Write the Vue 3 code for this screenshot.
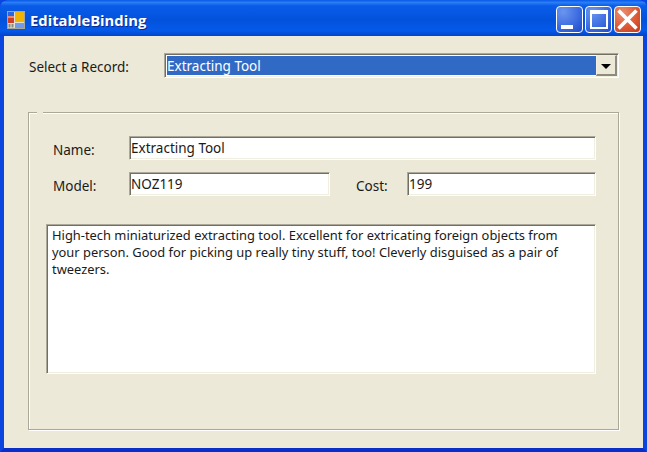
<script setup>
const description = 'High-tech miniaturized extracting tool. Excellent for extricating foreign objects from your person. Good for picking up really tiny stuff, too! Cleverly disguised as a pair of tweezers.'
</script>

<template>
  <div class="window">
    <header class="titlebar">
      <svg class="app-icon" width="18" height="18" viewBox="0 0 18 18">
        <rect x="0.5" y="0.5" width="17" height="17" fill="#e2e0d4" stroke="#a8a698" />
        <rect x="1" y="1" width="6" height="4" fill="#2a66e0" />
        <rect x="1" y="5" width="6" height="7" fill="#d23f28" />
        <rect x="1" y="5" width="6" height="2" fill="#e88a70" />
        <rect x="1.5" y="13" width="2" height="3.5" fill="#8a8a80" />
        <rect x="4.5" y="13" width="2" height="3.5" fill="#8a8a80" />
        <rect x="8" y="1" width="9" height="10" fill="#f2b400" />
        <rect x="8" y="12" width="9" height="5" fill="#6f9be8" />
      </svg>
      <span class="title">EditableBinding</span>
      <div class="controls">
        <div class="btn blue"><span class="min-glyph"></span></div>
        <div class="btn blue"><span class="max-glyph"></span></div>
        <div class="btn red">
          <svg width="21" height="21" viewBox="0 0 21 21">
            <path d="M1.5 1.5 L19.5 19.5 M19.5 1.5 L1.5 19.5" stroke="#fff" stroke-width="3.6" />
          </svg>
        </div>
      </div>
    </header>
    <main class="client">
      <div class="record-row">
        <span class="record-label">Select a Record:</span>
        <div class="combo">
          <span class="combo-value">Extracting Tool</span>
          <div class="combo-btn"><span class="arrow"></span></div>
        </div>
      </div>
      <section class="group">
        <span class="group-gap"></span>
        <div class="form-row name-row">
          <span class="lbl">Name:</span>
          <div class="field grow">Extracting Tool</div>
        </div>
        <div class="form-row model-row">
          <span class="lbl">Model:</span>
          <div class="field model">NOZ119</div>
          <span class="lbl cost-lbl">Cost:</span>
          <div class="field grow">199</div>
        </div>
        <div class="field memo">{{ description }}</div>
      </section>
    </main>
  </div>
</template>

<style>
html, body { margin: 0; padding: 0; background: #ece9d8; overflow: hidden; }
</style>

<style scoped>
.window {
  width: 647px;
  height: 452px;
  box-sizing: border-box;
  display: flex;
  flex-direction: column;
  background: #0831d9;
  border-left: 4px solid #0a45e0;
  border-right: 4px solid #0a45e0;
  border-bottom: 4px solid #0a2fc8;
  font-family: "Noto Sans", sans-serif;
  font-size: 13.5px;
  color: #1a1a1a;
}
.titlebar {
  height: 36px;
  box-sizing: border-box;
  margin: 0 -4px;
  padding: 3px 6px 0 7px;
  flex: none;
  display: flex;
  align-items: center;
  border-radius: 8px 8px 0 0;
  background: linear-gradient(180deg, #0a58e8 0%, #2a7ef5 7%, #0a5ce8 16%, #0352dc 55%, #0559ea 85%, #0244c8 100%);
}
.app-icon { flex: none; }
.title {
  margin-left: 5px;
  color: #fff;
  font-family: "Open Sans", sans-serif;
  font-weight: 700;
  font-size: 14.8px;
  text-shadow: 1px 1px 0 #0a2a90;
}
.controls { margin-left: auto; display: flex; gap: 2px; }
.btn {
  width: 27px;
  height: 27px;
  box-sizing: border-box;
  border: 1px solid #fff;
  border-radius: 4px;
  display: flex;
  align-items: center;
  justify-content: center;
  position: relative;
}
.blue { background: radial-gradient(circle at 25% 20%, #6a95ee 0%, #3d6de0 55%, #1d48c8 100%); }
.red { background: radial-gradient(circle at 30% 25%, #eb8e6e 0%, #dc5a36 55%, #c23a1c 100%); }
.min-glyph { position: absolute; left: 4px; bottom: 3px; width: 12px; height: 4px; background: #fff; }
.max-glyph { width: 18px; height: 19px; box-sizing: border-box; border: 2px solid #fff; border-top-width: 4px; }
.client {
  flex: 1;
  background: #ece9d8;
  padding: 17px 24px 18px 24px;
  display: flex;
  flex-direction: column;
}
.record-row { display: flex; align-items: center; height: 25px; }
.record-label { width: 136px; padding: 2px 0 0 1px; box-sizing: border-box; }
.combo {
  flex: 1;
  height: 25px;
  box-sizing: border-box;
  border: 1px solid;
  border-color: #aca899 #fff #fff #aca899;
  box-shadow: inset 1px 1px 0 #716f64, inset -1px -1px 0 #f1efe2;
  background: #fff;
  display: flex;
  padding: 2px;
}
.combo-value {
  flex: 1;
  background: #316ac5;
  color: #fff;
  line-height: 20px;
}
.combo-btn {
  width: 21px;
  margin: -1px -1px -1px 0;
  box-sizing: border-box;
  background: #ece9d8;
  border-style: solid;
  border-width: 1px 2px 2px 1px;
  border-color: #f1efe2 #8e8b7c #8e8b7c #f1efe2;
  display: flex;
  align-items: center;
  justify-content: center;
}
.arrow {
  width: 0;
  height: 0;
  margin-top: 2px;
  border-left: 5px solid transparent;
  border-right: 5px solid transparent;
  border-top: 5px solid #000;
}
.group {
  position: relative;
  margin-top: 34px;
  flex: 1;
  box-sizing: border-box;
  border: 1px solid #aca899;
  box-shadow: 1px 1px 0 #fff, inset 1px 1px 0 #fff;
  padding: 23px 22px 0 17px;
  display: flex;
  flex-direction: column;
}
.group-gap {
  position: absolute;
  left: 8px;
  top: -1px;
  width: 6px;
  height: 2px;
  background: #ece9d8;
}
.form-row { display: flex; align-items: center; height: 24px; }
.model-row { margin-top: 12px; }
.lbl { width: 83px; padding: 4px 0 0 7px; box-sizing: border-box; flex: none; }
.cost-lbl { width: 77px; padding-left: 26px; }
.field {
  box-sizing: border-box;
  height: 24px;
  border: 1px solid;
  border-color: #aca899 #fff #fff #aca899;
  box-shadow: inset 1px 1px 0 #716f64, inset -1px -1px 0 #f1efe2;
  background: #fff;
  padding: 1px 1px 0;
  line-height: 21px;
}
.grow { flex: 1; }
.model { width: 201px; flex: none; }
.memo {
  height: 150px;
  margin-top: 28px;
  padding: 2px 24px 2px 5px;
  font-size: 12.9px;
  line-height: 17px;
}
</style>
